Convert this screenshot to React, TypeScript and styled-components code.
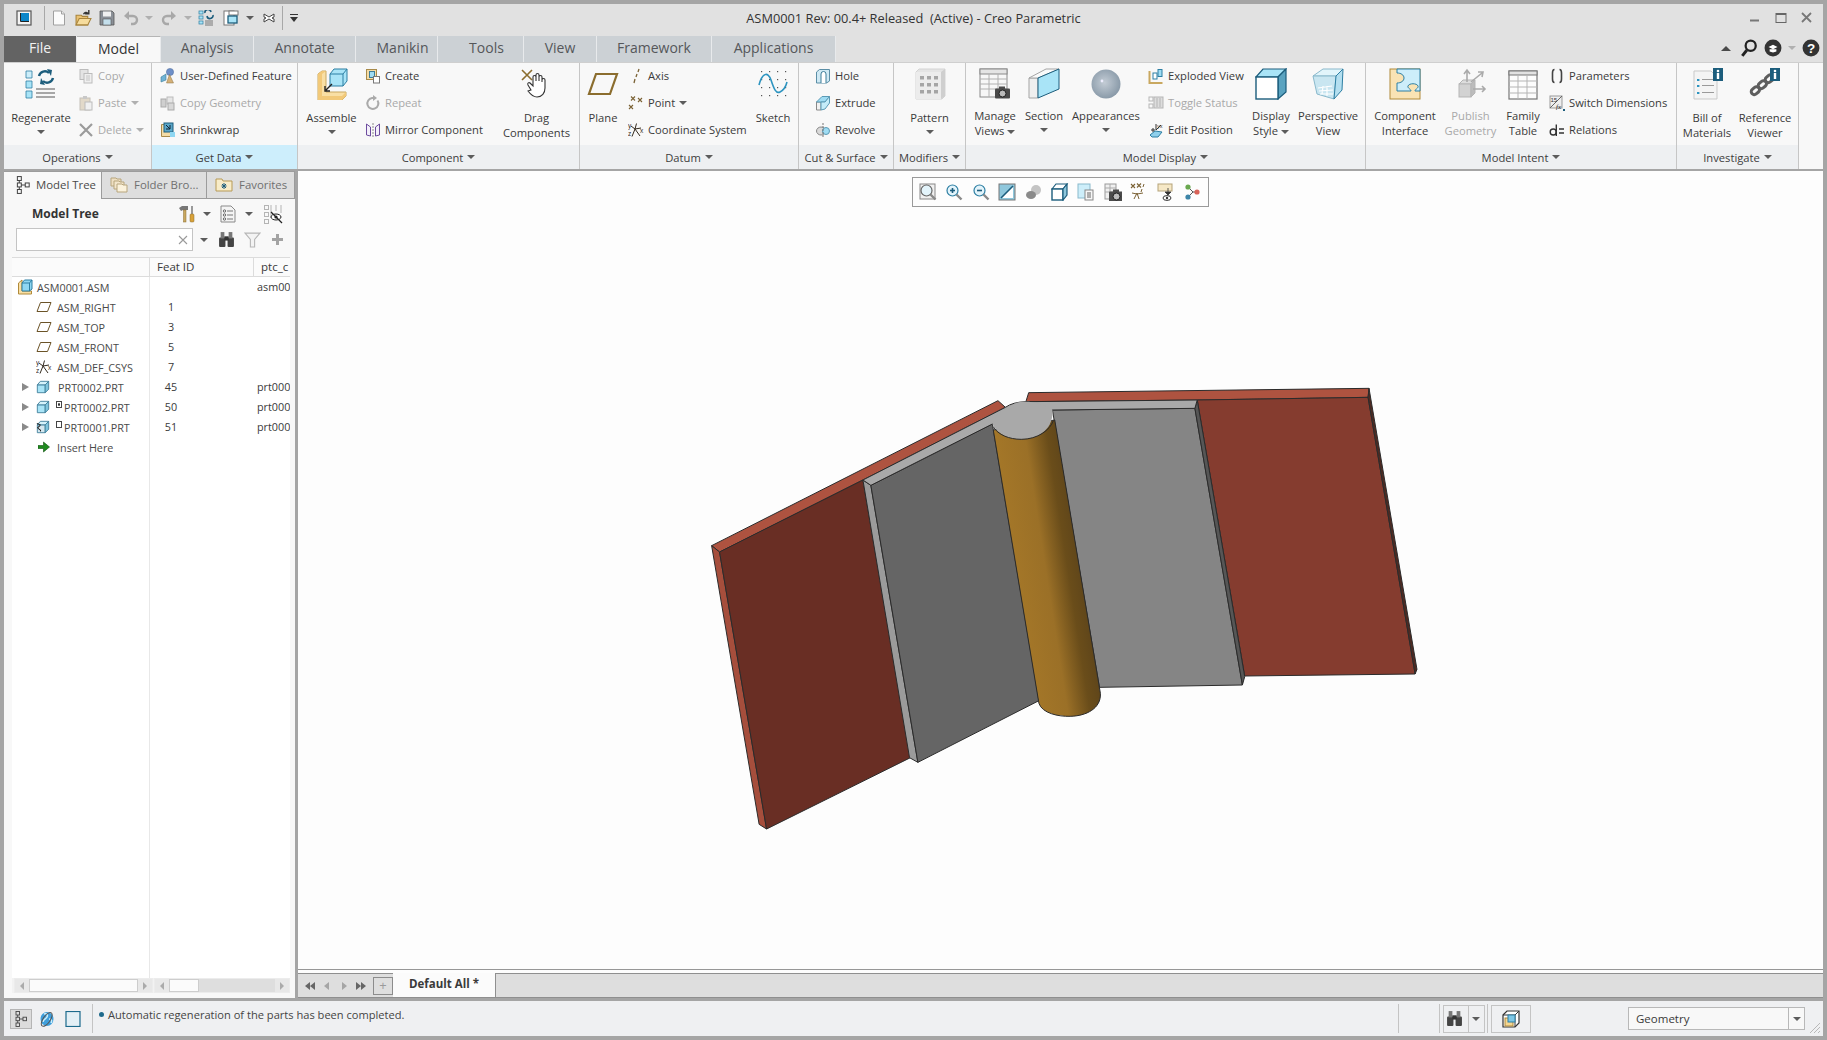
import React from "react";
import styled, { createGlobalStyle } from "styled-components";

const GlobalStyle = createGlobalStyle`
  html, body {
    margin: 0;
    padding: 0;
    overflow: hidden;
    background: #a5a5a5;
  }
  * {
    box-sizing: border-box;
  }
`;

const Window = styled.div`
  width: 1827px;
  height: 1040px;
  padding: 4px;
  background: #a5a5a5;
  display: flex;
  flex-direction: column;
  font-family: "Open Sans", "Noto Sans", sans-serif;
  font-size: 11.2px;
  color: #3a3a3a;
`;

/* ---------- title bar ---------- */
const TitleBar = styled.div`
  height: 32px;
  padding-bottom: 4px;
  background: #e1e1e1;
  display: grid;
  grid-template-columns: 1fr auto 1fr;
  align-items: center;
`;
const Qat = styled.div`
  display: flex;
  align-items: center;
  height: 100%;
`;
const QatSlot = styled.div<{ $w: number }>`
  width: ${(p) => p.$w}px;
  display: flex;
  justify-content: center;
  align-items: center;
`;
const QatSep = styled.div`
  width: 1px;
  height: 24px;
  background: #a8a8a8;
`;
const Title = styled.div`
  font-size: 12.8px;
  color: #333;
  white-space: pre;
`;
const WinControls = styled.div`
  display: flex;
  justify-content: flex-end;
  gap: 10px;
  padding-right: 8px;
`;

/* ---------- ribbon tabs ---------- */
const TabRow = styled.div`
  height: 26px;
  background: #e1e1e1;
  display: flex;
  align-items: stretch;
`;
const Tab = styled.div<{ $w: number; $kind?: "file" | "active"; $shift?: number }>`
  width: ${(p) => p.$w}px;
  display: flex;
  align-items: center;
  justify-content: center;
  padding-bottom: 3px;
  padding-left: ${(p) => p.$shift ?? 0}px;
  font-size: 14px;
  border-right: 1px solid #e8eaec;
  color: ${(p) => (p.$kind === "file" ? "#f2f2f2" : p.$kind === "active" ? "#333" : "#55575a")};
  background: ${(p) => (p.$kind === "file" ? "#636363" : p.$kind === "active" ? "#f8f8f8" : "#ccd1d5")};
  ${(p) => p.$kind === "active" && "border-top: 1px solid #b5b5b5;"}
`;
const TabRight = styled.div`
  flex: 1;
  display: flex;
  justify-content: flex-end;
  align-items: center;
  gap: 6px;
  padding: 0 3px 2px 0;
`;

/* ---------- ribbon ---------- */
const Ribbon = styled.div`
  height: 107px;
  margin-bottom: 2px;
  background: #f8f8f8;
  border-top: 1px solid #cfcfcf;
  display: flex;
`;
const Group = styled.div<{ $w: number }>`
  width: ${(p) => p.$w}px;
  flex: none;
  display: flex;
  flex-direction: column;
  border-right: 1px solid #c6c6c6;
`;
const GroupBody = styled.div<{ $pad?: number }>`
  flex: 1;
  display: flex;
  padding-left: ${(p) => p.$pad ?? 0}px;
`;
const GroupFooter = styled.div<{ $hot?: boolean }>`
  height: 24px;
  background: ${(p) => (p.$hot ? "#cdeefc" : "#eef0f2")};
  display: flex;
  align-items: center;
  justify-content: center;
  gap: 4px;
  color: #3d3d3d;
`;
const RibbonRest = styled.div`
  flex: 1;
`;
const Large = styled.div<{ $w: number; $off?: boolean }>`
  width: ${(p) => p.$w}px;
  flex: none;
  display: flex;
  flex-direction: column;
  align-items: center;
  padding-top: 5px;
  text-align: center;
  line-height: 15px;
  color: ${(p) => (p.$off ? "#a9a9a9" : "#3a3a3a")};
`;
const LargeLabel = styled.div<{ $tight?: boolean }>`
  margin-top: ${(p) => (p.$tight ? 8 : 10)}px;
  white-space: nowrap;
`;
const SmallCol = styled.div<{ $w: number; $pad?: number }>`
  width: ${(p) => p.$w}px;
  flex: none;
  margin-top: -1px;
  padding-left: ${(p) => p.$pad ?? 0}px;
  display: flex;
  flex-direction: column;
`;
const SmallRow = styled.div<{ $off?: boolean }>`
  height: 27px;
  display: flex;
  align-items: center;
  gap: 4px;
  white-space: nowrap;
  color: ${(p) => (p.$off ? "#a9a9a9" : "#3a3a3a")};
`;
const GroupSep = styled.div`
  width: 1px;
  margin: 8px 0 6px;
  background: #dcdcdc;
`;
const Caret = styled.span<{ $dim?: boolean }>`
  display: inline-block;
  flex: none;
  width: 0;
  height: 0;
  border-left: 4px solid transparent;
  border-right: 4px solid transparent;
  border-top: 4px solid ${(p) => (p.$dim ? "#b0b0b0" : "#5c5c5c")};
  vertical-align: middle;
`;
const CaretBelow = styled(Caret)`
  margin-top: 5px;
`;

/* ---------- main area ---------- */
const Main = styled.div`
  height: 827px;
  display: flex;
  gap: 3px;
`;
const Panel = styled.div`
  width: 291px;
  flex: none;
  background: #f8f8f8;
  display: flex;
  flex-direction: column;
  padding-bottom: 5px;
`;
const PanelTabs = styled.div`
  height: 28px;
  display: flex;
  background: #dedede;
`;
const PanelTab = styled.div<{ $w: number; $active?: boolean }>`
  width: ${(p) => p.$w}px;
  display: flex;
  align-items: center;
  gap: ${(p) => (p.$active ? 4 : 6)}px;
  padding: 0 0 2px ${(p) => (p.$active ? 10 : 8)}px;
  font-size: 11.4px;
  white-space: nowrap;
  color: ${(p) => (p.$active ? "#4a4a4a" : "#707070")};
  background: ${(p) => (p.$active ? "#f8f8f8" : "#dedede")};
  border-right: 1px solid #9c9c9c;
  border-top: 1px solid #9c9c9c;
  border-bottom: ${(p) => (p.$active ? "none" : "1px solid #9c9c9c")};
`;
const PanelHead = styled.div`
  height: 29px;
  display: flex;
  align-items: center;
`;
const PanelTitle = styled.div`
  width: 174px;
  padding-left: 28px;
  font-weight: 700;
  font-size: 12px;
  color: #333;
`;
const PanelSlot = styled.div<{ $w: number }>`
  width: ${(p) => p.$w}px;
  flex: none;
  display: flex;
  justify-content: center;
  align-items: center;
`;
const SearchRow = styled.div`
  height: 23px;
  display: flex;
  align-items: center;
  padding-left: 12px;
`;
const SearchBox = styled.div`
  width: 177px;
  height: 23px;
  flex: none;
  background: #fff;
  border: 1px solid #c4c4c4;
  display: flex;
  align-items: center;
  justify-content: flex-end;
  padding-right: 4px;
`;
const Tree = styled.div`
  flex: 1;
  margin: 6px 5px 0 8px;
  background: #fff;
  border-top: 1px solid #dcdcdc;
  display: flex;
  flex-direction: column;
`;
const TreeHeader = styled.div`
  height: 19px;
  flex: none;
  display: grid;
  grid-template-columns: 138px 104px 1fr;
  border-bottom: 1px solid #dcdcdc;
  background: #fbfbfb;
  font-size: 11.5px;
`;
const HeaderCell = styled.div`
  padding-left: 7px;
  line-height: 18px;
  border-right: 1px solid #dcdcdc;
  overflow: hidden;
  &:last-child {
    border-right: none;
  }
`;
const TreeRow = styled.div`
  height: 20px;
  flex: none;
  display: grid;
  grid-template-columns: 138px 104px 1fr;
  font-size: 10.8px;
`;
const NameCell = styled.div<{ $pad: number }>`
  display: flex;
  align-items: center;
  padding-left: ${(p) => p.$pad}px;
  border-right: 1px solid #e8e8e8;
  white-space: nowrap;
  color: #4a4a4a;
`;
const IdCell = styled.div`
  width: 42px;
  text-align: center;
  line-height: 20px;
`;
const ParamCell = styled.div`
  line-height: 20px;
  overflow: hidden;
  white-space: nowrap;
  margin-left: 3px;
`;
const Expander = styled.span`
  width: 0;
  height: 0;
  flex: none;
  margin-right: 7px;
  border-top: 4.5px solid transparent;
  border-bottom: 4.5px solid transparent;
  border-left: 7px solid #8a8a8a;
`;
const RowLabel = styled.span<{ $gap: number }>`
  margin-left: ${(p) => p.$gap}px;
`;
const Marker = styled.span<{ $dot?: boolean }>`
  width: 6px;
  height: 7px;
  flex: none;
  margin: -5px 1px 0 6px;
  border: 1px solid #444;
  background: ${(p) => (p.$dot ? "radial-gradient(#333 30%, #fff 40%)" : "#fff")};
`;
const TreeFiller = styled.div`
  flex: 1;
  display: grid;
  grid-template-columns: 138px 1fr;
`;
const FillerCell = styled.div`
  border-right: 1px solid #e8e8e8;
`;
const ScrollRow = styled.div`
  height: 15px;
  flex: none;
  display: grid;
  grid-template-columns: 139px 1fr;
  gap: 1px;
  padding-left: 2px;
  background: #f2f2f2;
`;
const ScrollBar = styled.div`
  display: flex;
  height: 15px;
  background: #dedede;
  border: 1px solid #ececec;
`;
const ScrollBtn = styled.div`
  width: 14px;
  display: flex;
  align-items: center;
  justify-content: center;
  background: #e8e8e8;
`;
const ScrollArrow = styled.span<{ $dir: "l" | "r" }>`
  width: 0;
  height: 0;
  border-top: 4px solid transparent;
  border-bottom: 4px solid transparent;
  ${(p) => (p.$dir === "l" ? "border-right" : "border-left")}: 4px solid #ababab;
`;
const ScrollTrack = styled.div<{ $w?: number; $light?: boolean }>`
  ${(p) => (p.$w ? `width: ${p.$w}px; flex: none;` : "flex: 1;")}
  background: ${(p) => (p.$light ? "#fbfbfb" : "#dedede")};
  ${(p) => p.$light && "border: 1px solid #cdcdcd;"}
`;

const Viewport = styled.div`
  flex: 1;
  display: flex;
  flex-direction: column;
  background: #fdfdfd;
`;
const Canvas = styled.div`
  flex: 1;
  position: relative;
  background: #fdfdfd;
  border-bottom: 1px solid #979797;
`;
const MiniToolbar = styled.div`
  position: absolute;
  top: 6px;
  left: 614px;
  width: 297px;
  height: 30px;
  background: #fdfdfd;
  border: 1px solid #9a9a9a;
  display: flex;
  align-items: center;
  gap: 8.4px;
  padding-left: 6px;
`;
const ModelSvg = styled.svg`
  position: absolute;
  left: 402px;
  top: 209px;
  width: 730px;
  height: 460px;
`;
const ModelTabs = styled.div`
  height: 25px;
  margin-top: 3px;
  background: #dedede;
  border-top: 1px solid #8f8f8f;
  border-bottom: 1px solid #8f8f8f;
  display: flex;
  align-items: stretch;
`;
const TabNav = styled.div`
  width: 95px;
  display: flex;
  align-items: center;
  padding-left: 3px;
`;
const NavGlyph = styled.div`
  width: 17px;
  display: flex;
  justify-content: center;
`;
const NewTab = styled.div`
  width: 20px;
  height: 18px;
  margin-left: 4px;
  border: 1px solid #8c8c8c;
  display: flex;
  align-items: center;
  justify-content: center;
  color: #9a9a9a;
  font-size: 13px;
  line-height: 1;
`;
const ModelTab = styled.div`
  width: 103px;
  margin: -1px 0 0;
  padding-bottom: 3px;
  background: #fbfbfb;
  border-right: 1px solid #8f8f8f;
  display: flex;
  align-items: center;
  justify-content: center;
  font-weight: 700;
  font-size: 11.5px;
  color: #3a3a3a;
`;

/* ---------- status bar ---------- */
const StatusBar = styled.div`
  height: 35px;
  margin-top: 3px;
  background: #eff0f2;
  display: flex;
  align-items: center;
  position: relative;
`;
const ToggleBox = styled.div`
  width: 22px;
  height: 20px;
  margin: 0 7px 0 6px;
  background: #dcdcdc;
  border: 1px solid #b5b5b5;
  display: flex;
  align-items: center;
  justify-content: center;
`;
const StatusIcon = styled.div`
  width: 16px;
  margin-right: 10px;
  display: flex;
`;
const StatusSep = styled.div<{ $ml?: number }>`
  width: 1px;
  height: 29px;
  margin-left: ${(p) => p.$ml ?? 0}px;
  background: #c4c4c4;
  flex: none;
`;
const Message = styled.div`
  flex: none;
  width: 1305px;
  display: flex;
  align-items: center;
  gap: 4px;
  padding: 0 0 8px 6px;
  font-size: 11.1px;
  color: #444;
`;
const Bullet = styled.span`
  width: 5px;
  height: 5px;
  border-radius: 50%;
  background: #1f6a8c;
`;
const StatusBox = styled.div<{ $w: number }>`
  width: ${(p) => p.$w}px;
  height: 28px;
  margin-left: 3px;
  flex: none;
  border: 1px solid #c4c4c4;
  display: flex;
  align-items: center;
  justify-content: center;
`;
const BoxDivider = styled.div`
  width: 15px;
  height: 100%;
  margin-left: 5px;
  border-left: 1px solid #c4c4c4;
  display: flex;
  align-items: center;
  justify-content: center;
`;
const Select = styled.div`
  width: 177px;
  height: 23px;
  margin-left: 97px;
  flex: none;
  background: #f8f8f8;
  border: 1px solid #b8b8b8;
  display: flex;
  align-items: center;
  padding-left: 7px;
  font-size: 11.5px;
`;
const SelectLabel = styled.div`
  flex: 1;
`;
const SelectBtn = styled.div`
  width: 16px;
  height: 100%;
  border-left: 1px solid #b8b8b8;
  display: flex;
  align-items: center;
  justify-content: center;
`;
const Grip = styled.svg`
  position: absolute;
  right: 2px;
  bottom: 2px;
`;

/* ---------- icons ---------- */
const I = ({ s = 16, vb = 16, children }: { s?: number; vb?: number; children: React.ReactNode }) => (
  <svg width={s} height={s} viewBox={`0 0 ${vb} ${vb}`} style={{ flex: "none", display: "block" }}>
    {children}
  </svg>
);

const Cube16 = ({ front = "#a9e4f7", top = "#d4f2fb", side = "#7fc4dc", line = "#3c7d99" }) => (
  <g stroke={line} strokeWidth="1" strokeLinejoin="round">
    <polygon points="1.5,5.5 10.5,5.5 10.5,14.5 1.5,14.5" fill={front} />
    <polygon points="1.5,5.5 5,1.5 14.5,1.5 10.5,5.5" fill={top} />
    <polygon points="10.5,5.5 14.5,1.5 14.5,10.5 10.5,14.5" fill={side} />
  </g>
);

const CopyIcon = () => (
  <I>
    <rect x="2" y="1.5" width="8" height="10" fill="#e4e4e4" stroke="#bcbcbc" />
    <rect x="6" y="5.5" width="8" height="9.5" fill="#efefef" stroke="#bcbcbc" />
    <path d="M8 8h4M8 10h4M8 12h4" stroke="#c4c4c4" />
  </I>
);
const PasteIcon = () => (
  <I>
    <rect x="2" y="3" width="10" height="12" fill="#e2d9c9" stroke="#c4c0b8" />
    <rect x="5" y="1" width="4" height="3" fill="#c8c8c8" />
    <rect x="7" y="7" width="7" height="8" fill="#f0f0f0" stroke="#bcbcbc" />
  </I>
);
const DeleteIcon = () => (
  <I>
    <path d="M2 2l12 12M14 2L2 14" stroke="#9b9b9b" strokeWidth="2.2" />
  </I>
);
const UdfIcon = () => (
  <I>
    <path d="M1 9l5-3v6l-5 2z" fill="#6fb3d6" stroke="#3c7d99" strokeWidth=".6" />
    <circle cx="10" cy="4" r="3.6" fill="#6e8fc8" stroke="#4d6a9a" strokeWidth=".5" />
    <path d="M9.5 6.5L6.5 15h7z" fill="#d4b078" stroke="#8b7040" strokeWidth=".5" />
  </I>
);
const CopyGeomIcon = () => (
  <I>
    <rect x="1" y="4" width="5" height="8" fill="#cfcfcf" stroke="#aaa" />
    <rect x="7" y="2" width="6" height="7" fill="#e6e6e6" stroke="#bbb" />
    <rect x="8" y="8" width="6" height="7" fill="#d8d8d8" stroke="#aaa" />
  </I>
);
const ShrinkIcon = () => (
  <I>
    <path d="M1.5 2.5h10v12h-10z" fill="#f4dca6" stroke="#a88a4a" />
    <rect x="4" y="1" width="9" height="9" fill="#5aa6c8" stroke="#1c5d7c" />
    <path d="M6 3l4 4M10 3v4H6" stroke="#123" fill="none" />
    <rect x="10" y="10" width="5" height="5" fill="#8fd7f2" />
  </I>
);
const CreateIcon = () => (
  <I>
    <rect x="1.5" y="1.5" width="10" height="10" fill="#f4dca6" stroke="#a88a4a" />
    <rect x="4.5" y="3.5" width="5" height="6" fill="#9fdcf3" stroke="#3c7d99" />
    <rect x="8.5" y="8.5" width="6" height="6.5" fill="#fff" stroke="#777" />
  </I>
);
const RepeatIcon = () => (
  <I>
    <path d="M12.5 5.5A5.5 5.5 0 1 1 7 3h2" fill="none" stroke="#aaa" strokeWidth="2" />
    <path d="M8 0l4 3-4 3z" fill="#aaa" />
  </I>
);
const MirrorIcon = () => (
  <I>
    <path d="M1.5 2l4 3v9l-4-1zM14.5 2l-4 3v9l4-1z" fill="#f3effa" stroke="#6d4c9e" />
    <path d="M8 1v14" stroke="#8a8a8a" strokeDasharray="2 1" />
  </I>
);
const AxisIcon = () => (
  <I>
    <path d="M11 1l-1 3M9 6L8 9M7 11l-1 4" stroke="#7b6235" strokeWidth="1.3" />
  </I>
);
const XMark = ({ x, y, c = "#7b6235" }: { x: number; y: number; c?: string }) => (
  <path d={`M${x - 2} ${y - 2}l4 4m0-4l-4 4`} stroke={c} strokeWidth="1.1" />
);
const PointIcon = () => (
  <I>
    <XMark x={5} y={3.5} />
    <XMark x={12} y={5} />
    <XMark x={3} y={12} />
  </I>
);
const CsysIcon = ({ c = "#332a1e" }: { c?: string }) => (
  <I>
    <path d="M8.5 1.5L7 7l-3 7.5M7 7l5 7M3 4l4 3 6-1" stroke={c} fill="none" strokeWidth="1" />
    <text x="0" y="5.5" fontSize="6.5" fill={c} fontFamily="Liberation Sans, sans-serif">y</text>
    <text x="0" y="14" fontSize="6.5" fill={c} fontFamily="Liberation Sans, sans-serif">z</text>
    <text x="12" y="11" fontSize="6.5" fill={c} fontFamily="Liberation Sans, sans-serif">x</text>
  </I>
);
const HoleIcon = () => (
  <I>
    <path d="M1.5 4l3-2.5h10V13l-3 2h-10z" fill="#cfe9f4" stroke="#5b8ea6" />
    <path d="M6 15V6a2.5 2.5 0 0 1 5 0v9" fill="#fff" stroke="#3c7d99" />
  </I>
);
const ExtrudeIcon = () => (
  <I>
    <polygon points="1.5,7 6,7 6,15 1.5,15" fill="#f1f1f1" stroke="#888" />
    <polygon points="1.5,7 7,1.5 14.5,1.5 10,7" fill="#9fdcf3" stroke="#5b9ab5" />
    <polygon points="6,7 10,7 14.5,1.5 14.5,8 10,14 6,15" fill="#c4ecf9" stroke="#5b9ab5" />
  </I>
);
const RevolveIcon = () => (
  <I>
    <ellipse cx="6" cy="9" rx="4.5" ry="4" fill="#d9d9d9" stroke="#888" />
    <ellipse cx="11" cy="9" rx="3.5" ry="3.5" fill="#9fdcf3" stroke="#5b9ab5" />
    <path d="M8 1v14" stroke="#777" strokeDasharray="2 1" />
  </I>
);
const ExplodedIcon = () => (
  <I>
    <path d="M1.5 3v12h13" fill="none" stroke="#c9a860" strokeWidth="2" />
    <rect x="5" y="5" width="4" height="6" fill="#fff" stroke="#2d7fa3" />
    <rect x="10" y="1.5" width="4" height="7" fill="#9fdcf3" stroke="#2d7fa3" />
  </I>
);
const ToggleIcon = () => (
  <I>
    <rect x="1" y="2" width="4" height="4" fill="none" stroke="#b5b5b5" />
    <rect x="1" y="9" width="4" height="4" fill="none" stroke="#b5b5b5" />
    <rect x="6" y="2" width="9" height="11" fill="#ddd" stroke="#b5b5b5" />
    <path d="M9 3v9M12 3v9" stroke="#b5b5b5" />
  </I>
);
const EditPosIcon = () => (
  <I>
    <path d="M2 13l5-4 7 1-4 5H4z" fill="#8fd0ec" stroke="#2d7fa3" />
    <path d="M3 8h4M5 6v4M8 2v6M8 8l5-5" stroke="#333" />
    <text x="9" y="6" fontSize="5.5" fill="#333" fontFamily="Liberation Sans, sans-serif">yx</text>
  </I>
);
const ParamsIcon = () => (
  <I>
    <path d="M5.5 1.5C3.500 1.500 3.500 3 3.500 5v6c0 2 0 3.500 2 3.500M10.500 1.500c2 0 2 1.500 2 3.500v6c0 2 0 3.500-2 3.500" fill="none" stroke="#444" strokeWidth="1.6" />
  </I>
);
const SwitchIcon = () => (
  <I>
    <rect x="1" y="1" width="12" height="12" fill="#eee" stroke="#999" />
    <path d="M1 13L13 1" stroke="#666" />
    <text x="1.5" y="6.5" fontSize="6" fill="#333" fontFamily="Liberation Sans, sans-serif">15</text>
    <text x="7" y="14" fontSize="7" fontStyle="italic" fill="#222" fontFamily="Liberation Serif, serif">fx</text>
    <rect x="14" y="14" width="2" height="2" fill="#1c5d7c" />
  </I>
);
const RelationsIcon = () => (
  <I>
    <circle cx="4.2" cy="10" r="3" fill="none" stroke="#333" strokeWidth="1.4" />
    <path d="M7.3 2.5V14" stroke="#333" strokeWidth="1.4" />
    <path d="M10 7h5M10 11h5" stroke="#333" strokeWidth="1.4" />
  </I>
);

const L = ({ children }: { children: React.ReactNode }) => (
  <I s={32} vb={32}>
    {children}
  </I>
);
const RegenIcon = () => (
  <L>
    <g stroke="#2d7fa3" strokeWidth=".8">
      <polygon points="1,3 7,3 7,10 1,10" fill="#cdeefa" />
      <polygon points="1,13 7,13 7,20 1,20" fill="#a9e4f7" />
      <polygon points="1,23 7,23 7,30 1,30" fill="#a9e4f7" />
    </g>
    <path d="M14 8a6 6 0 0 1 10-3M28 10a6 6 0 0 1-10 3" fill="none" stroke="#1c5d7c" strokeWidth="2.4" />
    <path d="M22 1l5 1-1 6zM20 17l-5-1 1-6z" fill="#1c5d7c" />
    <path d="M11 21h19M11 25h19M11 29h19" stroke="#8c8c8c" strokeWidth="1.6" />
  </L>
);
const AssembleIcon = () => (
  <L>
    <polygon points="2,6 6,3 10,3 10,24 30,24 30,28 26,32 2,32" fill="#f9dfa4" stroke="#c9a860" />
    <polygon points="2,6 6,3 10,3 6,6 6,28 26,28 30,24 30,28 26,32 2,32" fill="#f2c979" />
    <polygon points="14,6 18,1 31,1 31,13 27,18 14,18" fill="#a9e4f7" stroke="#2d7fa3" />
    <path d="M14 6h13v12M27 6l4-5" fill="none" stroke="#2d7fa3" />
    <path d="M16 16l-6 6M9 18v5h5" stroke="#222" fill="none" strokeWidth="1.4" />
  </L>
);
const DragIcon = () => (
  <L>
    <path d="M1 2l10 10M11 2L1 12" stroke="#8b6d2e" strokeWidth="1.6" />
    <path d="M10 22l-3-5c-1-2 1-3 2-2l3 3V9c0-2 3-2 3 0v4-6c0-2 3-2 3 0v6-4c0-2 3-2 3 0v5-2c0-2 3-2 3 0v8c0 5-3 9-8 9-4 0-6-2-9-6z" fill="#fff" stroke="#333" strokeWidth="1.1" />
  </L>
);
const PlaneIcon = () => (
  <L>
    <path d="M9 6h21l-7 20H2z" fill="none" stroke="#8b6d2e" strokeWidth="2.2" />
  </L>
);
const SketchIcon = () => (
  <L>
    <g fill="#555">
      {[4, 12, 20, 28].map((x) => [3, 11, 19, 27].map((y) => <rect key={`${x}-${y}`} x={x} y={y} width="1.2" height="1.2" />))}
    </g>
    <path d="M2 17c3-12 9-14 12-5s5 14 9 12 6-6 7-10" fill="none" stroke="#2d94c0" strokeWidth="1.6" />
  </L>
);
const PatternIcon = () => (
  <L>
    <polygon points="2,4 5,1 31,1 31,28 28,31 2,31" fill="#e4e4e4" stroke="#d4d4d4" />
    <rect x="2" y="4" width="25" height="27" fill="#ececec" />
    <polygon points="27,4 31,1 31,28 27,31" fill="#cfcfcf" />
    <g fill="#a5a5a5">
      {[6, 13, 20].map((x) => [8, 15, 22].map((y) => <rect key={`${x}-${y}`} x={x} y={y} width="4" height="3.5" />))}
    </g>
  </L>
);
const CameraMark = ({ x, y }: { x: number; y: number }) => (
  <g transform={`translate(${x} ${y})`}>
    <rect x="0" y="2.5" width="15" height="10" rx="1" fill="#4a4a4a" />
    <rect x="4" y="0.5" width="6" height="3" fill="#4a4a4a" />
    <circle cx="7.5" cy="7.5" r="3.5" fill="#bbb" stroke="#222" />
  </g>
);
const ManageViewsIcon = () => (
  <L>
    <rect x="1" y="1" width="27" height="28" fill="#f7f7f7" stroke="#8a8a8a" />
    <rect x="1" y="1" width="27" height="5" fill="#e4e4e4" stroke="#8a8a8a" />
    <path d="M1 11h27M1 16h27M1 21h27M10 6v23M19 6v23" stroke="#b0b0b0" />
    <CameraMark x={16} y={18} />
  </L>
);
const SectionIcon = () => (
  <L>
    <polygon points="1,10 10,10 10,30 1,30" fill="#efefef" stroke="#a5a5a5" />
    <polygon points="1,10 18,1 31,1 10,10" fill="#fafafa" stroke="#a5a5a5" />
    <polygon points="10,10 31,1 31,21 10,30" fill="#a9e4f7" stroke="#1c5d7c" />
  </L>
);
const SphereIcon = () => (
  <L>
    <defs>
      <radialGradient id="sph" cx="45%" cy="45%" r="60%">
        <stop offset="0" stopColor="#c3ccd5" />
        <stop offset="1" stopColor="#8596a5" />
      </radialGradient>
    </defs>
    <circle cx="16" cy="16" r="14.5" fill="url(#sph)" />
    <circle cx="12" cy="13" r="1.4" fill="#eef" />
  </L>
);
const DisplayStyleIcon = () => (
  <L>
    <polygon points="1,9 8,1 31,1 23,9" fill="#a9e4f7" stroke="#1c5d7c" strokeWidth="1.2" />
    <polygon points="23,9 31,1 31,24 23,31" fill="#5aa3c0" stroke="#1c5d7c" strokeWidth="1.2" />
    <rect x="1" y="9" width="22" height="22" fill="#fff" stroke="#1c5d7c" strokeWidth="1.4" />
  </L>
);
const PerspectiveIcon = () => (
  <L>
    <polygon points="1,8 11,1 31,1 24,8" fill="#e2f5fb" stroke="#8ab9cc" />
    <polygon points="1,8 24,8 22,31 5,26" fill="#c9e6f1" stroke="#8ab9cc" />
    <polygon points="24,8 31,1 30,22 22,31" fill="#b4dff0" stroke="#2d7fa3" />
    <path d="M6 20l14-2M7 23l14-1M8 26l13 0M11 18l-1 8M15 18v10" stroke="#fff" strokeWidth="1.2" />
  </L>
);
const InterfaceIcon = () => (
  <L>
    <rect x="1" y="1" width="30" height="30" fill="#f9e3b4" stroke="#b08a3a" />
    <path d="M8 1H31V23H26C26 21 30 20 29 18 28 15 20 15 19 18 18 20 22 21 22 23H8V15C12 15 15 13 15 10 15 7 12 5 8 5Z" fill="#cdeefa" stroke="#2d7fa3" />
  </L>
);
const PublishIcon = () => (
  <L>
    <polygon points="4,16 8,12 20,12 16,16" fill="#ddd" stroke="#b5b5b5" />
    <rect x="4" y="16" width="12" height="13" fill="#d2d2d2" stroke="#b5b5b5" />
    <polygon points="16,16 20,12 20,25 16,29" fill="#bcbcbc" stroke="#b5b5b5" />
    <path d="M12 14V3M9 6l3-4 3 4M16 14l11-9M23 4l5 0-1 5M18 21h12M27 18l3 3-3 3" stroke="#aaa" strokeWidth="1.6" fill="none" />
  </L>
);
const TableIcon = () => (
  <L>
    <rect x="2" y="3" width="28" height="28" fill="#fdfdfd" stroke="#777" strokeWidth="1.2" />
    <rect x="2" y="3" width="28" height="4" fill="#e2e2e2" stroke="#777" />
    <path d="M2 13h28M2 19h28M2 25h28M11 7v24M20 7v24" stroke="#b5b5b5" />
  </L>
);
const InfoBadge = ({ x }: { x: number }) => (
  <g transform={`translate(${x} 0)`}>
    <rect width="10" height="13" fill="#1c5d7c" />
    <circle cx="5" cy="3" r="1.3" fill="#fff" />
    <rect x="3.8" y="5" width="2.4" height="6" fill="#fff" />
  </g>
);
const BomIcon = () => (
  <L>
    <polygon points="3,3 20,3 26,9 26,31 3,31" fill="#f4f4f4" stroke="#c9c9c9" />
    {[11, 17, 24].map((y) => (
      <g key={y}>
        <rect x="6" y={y} width="2.4" height="2" fill="#2d94c0" />
        <rect x="11" y={y} width="12" height="1" fill="#9a9a9a" />
      </g>
    ))}
    <InfoBadge x={22} />
  </L>
);
const RefViewerIcon = () => (
  <L>
    <g fill="none" stroke="#5e5e5e" strokeWidth="3">
      <rect x="2" y="20" width="9" height="6" rx="3" transform="rotate(-40 6 23)" />
      <rect x="9" y="14" width="9" height="6" rx="3" transform="rotate(-40 13 17)" />
      <rect x="16" y="8" width="9" height="6" rx="3" transform="rotate(-40 20 11)" />
    </g>
    <InfoBadge x={21} />
  </L>
);

const Glass = ({ sign }: { sign?: "+" | "-" | "box" }) => (
  <I s={18} vb={18}>
    {sign === "box" && <rect x="1" y="1" width="15" height="15" fill="#f0f0f0" stroke="#888" />}
    <circle cx="7.5" cy="7.5" r="5.5" fill="#e3f4fb" stroke={sign === "box" ? "#666" : "#2d7fa3"} strokeWidth="1.2" />
    <path d="M11.5 11.5l5 5" stroke="#8a8a8a" strokeWidth="2.4" />
    {sign && sign !== "box" && <path d="M5 7.5h5" stroke="#1c5d7c" strokeWidth="1.6" />}
    {sign === "+" && <path d="M7.5 5v5" stroke="#1c5d7c" strokeWidth="1.6" />}
  </I>
);
const MiniIcons = () => (
  <>
    <Glass sign="box" />
    <Glass sign="+" />
    <Glass sign="-" />
    <I s={18} vb={18}>
      <rect x="1" y="1" width="16" height="16" fill="#8fc7dc" stroke="#777" />
      <path d="M3 15L15 3V15z" fill="#fff" />
      <path d="M3 15L15 3" stroke="#1c5d7c" strokeWidth="1.6" />
    </I>
    <I s={18} vb={18}>
      <ellipse cx="11" cy="7" rx="5" ry="5" fill="#c4c4c4" />
      <ellipse cx="6" cy="12" rx="5" ry="4" fill="#8a8a8a" />
    </I>
    <I s={18} vb={18}>
      <polygon points="1,6 5,1 16,1 12,6" fill="#fff" stroke="#1c5d7c" strokeWidth="1.2" />
      <rect x="1" y="6" width="11" height="11" fill="#fff" stroke="#1c5d7c" strokeWidth="1.4" />
      <polygon points="12,6 16,1 16,12 12,17" fill="#8fc7dc" stroke="#1c5d7c" strokeWidth="1.2" />
    </I>
    <I s={18} vb={18}>
      <rect x="1" y="1" width="12" height="14" fill="#cdeefa" stroke="#8ab9cc" />
      <rect x="8" y="7" width="8" height="10" fill="#f7f7f7" stroke="#888" />
      <path d="M10 10h4M10 12h4M10 14h4" stroke="#666" />
    </I>
    <I s={18} vb={18}>
      <rect x="1" y="1" width="11" height="15" fill="#f0f0f0" stroke="#999" />
      <path d="M1 5h11M1 9h11M6 1v15" stroke="#aaa" />
      <CameraMark x={5} y={6} />
    </I>
    <I s={18} vb={18}>
      <XMark x={3} y={3} />
      <XMark x={9} y={2.5} />
      <path d="M14 1l-1 3M12 6l-1 3" stroke="#7b6235" />
      <path d="M4 16l3-6 2 6M2 10l5 1 6-1" stroke="#7b6235" fill="none" />
    </I>
    <I s={18} vb={18}>
      <rect x="1" y="1" width="14" height="7" fill="#f6e8c6" stroke="#b5a37a" />
      <path d="M11 5v4M8 9h6l-3 3z" fill="#333" stroke="#333" strokeWidth=".8" />
      <ellipse cx="10" cy="15" rx="4" ry="2.4" fill="#fff" stroke="#333" />
      <circle cx="10" cy="15" r="1.2" fill="#333" />
    </I>
    <I s={18} vb={18}>
      <path d="M5 4l5 5-5 5M10 9h4" stroke="#555" fill="none" />
      <circle cx="5" cy="4" r="2.6" fill="#6aa84f" />
      <circle cx="14" cy="9" r="2.6" fill="#d9645a" />
      <circle cx="5" cy="14" r="2.6" fill="#3d85a8" />
    </I>
  </>
);

const DocIcon = () => (
  <I s={16}>
    <path d="M2.5 1h8l3 3v11h-11z" fill="#fbfbfb" stroke="#a0a0a0" />
    <path d="M10.500 1v3h3" fill="#e8e8e8" stroke="#a0a0a0" />
  </I>
);
const OpenIcon = () => (
  <I s={17} vb={16}>
    <path d="M1 14V5h5l1 1h5v8z" fill="#e9c173" stroke="#a8843c" />
    <path d="M1 14l3-6h11l-3 6z" fill="#f6dc9d" stroke="#a8843c" />
    <path d="M8 4c1-2 3-2 4-1M13 0v3.500h-3.500" stroke="#333" fill="none" strokeWidth="1.300" />
  </I>
);
const SaveIcon = () => (
  <I s={16}>
    <path d="M1 1h12l2 2v12H1z" fill="#8b9097" stroke="#555" strokeWidth=".8" />
    <rect x="4" y="1.500" width="8" height="5" fill="#f0f0f0" />
    <rect x="4" y="9" width="8" height="6" fill="#c4dfec" stroke="#555" strokeWidth=".6" />
  </I>
);
const UndoIcon = ({ flip }: { flip?: boolean }) => (
  <svg width="16" height="16" viewBox="0 0 16 16" style={{ transform: flip ? "scaleX(-1)" : undefined, display: "block" }}>
    <path d="M4 6h6a3.500 3.500 0 0 1 0 8H8" fill="none" stroke="#a8a8a8" strokeWidth="2.400" />
    <path d="M6 1v9L1 6z" fill="#a8a8a8" />
  </svg>
);
const RegenSmall = () => (
  <I s={16}>
    <rect x="1" y="1" width="4" height="3" fill="#a9e4f7" stroke="#2d7fa3" strokeWidth=".7" />
    <rect x="1" y="6" width="4" height="3" fill="#a9e4f7" stroke="#2d7fa3" strokeWidth=".7" />
    <rect x="1" y="11" width="4" height="3" fill="#a9e4f7" stroke="#2d7fa3" strokeWidth=".7" />
    <path d="M7 3a3 3 0 0 1 6-1M15 5a3 3 0 0 1-6 1" fill="none" stroke="#1c5d7c" strokeWidth="1.6" />
    <path d="M7 11h8M7 13h8M7 15h8" stroke="#777" />
  </I>
);
const WindowsIcon = () => (
  <I s={16}>
    <rect x="1" y="1" width="10" height="14" fill="#fff" stroke="#777" />
    <rect x="6" y="1" width="9" height="4" fill="#fff" stroke="#777" />
    <rect x="5" y="6" width="9" height="7" fill="#a9e4f7" stroke="#1c5d7c" strokeWidth="1.300" />
  </I>
);
const CloseSmall = () => (
  <I s={14} vb={14}>
    <path d="M2 3l5 3 5-3v3l-2 1 2 1v3L7 8l-5 3V8l2-1-2-1z" fill="#fff" stroke="#444" />
  </I>
);
const AppIcon = () => (
  <I s={16}>
    <rect x="1" y="1" width="14" height="14" fill="#f4f4f4" stroke="#555" strokeWidth="1.200" />
    <rect x="5" y="3" width="8" height="8" fill="#0b86c9" />
    <path d="M4.500 3v8.500H13" fill="none" stroke="#222" />
  </I>
);
const CustomizeMark = () => (
  <I s={12} vb={12}>
    <path d="M2 2.500h8" stroke="#333" />
    <path d="M2 5h8l-4 5z" fill="#333" />
  </I>
);
const Binoculars = () => (
  <I s={17} vb={16}>
    <rect x="1" y="6" width="6" height="9" rx="1" fill="#444" />
    <rect x="9" y="6" width="6" height="9" rx="1" fill="#444" />
    <rect x="2.5" y="1" width="3.5" height="6" fill="#777" />
    <rect x="10" y="1" width="3.5" height="6" fill="#777" />
    <rect x="6" y="5" width="4" height="4" fill="#333" />
  </I>
);
const TreeIcon = ({ s = 16 }: { s?: number }) => (
  <I s={s} vb={16}>
    <g fill="none" stroke="#444" strokeWidth=".9">
      <rect x="3" y="0.5" width="3.5" height="3.5" />
      <rect x="3" y="6.2" width="3.5" height="3.5" />
      <rect x="3" y="12" width="3.5" height="3.5" />
      <rect x="10" y="6.2" width="3.5" height="3.5" />
      <path d="M4.7 4v2.2M4.7 9.700V12M6.500 8H10" />
    </g>
  </I>
);
const FolderPair = () => (
  <I s={18} vb={18}>
    <path d="M1 3h5l1 1h4v7H1z" fill="#eedfc2" stroke="#b7a57d" />
    <path d="M4 6h5l1 1h4v7H4z" fill="#f3e6cc" stroke="#b7a57d" />
    <path d="M7 9h5l1 1h4v7H7z" fill="#fbf2dc" stroke="#b7a57d" />
  </I>
);
const FavFolder = () => (
  <I s={18} vb={18}>
    <path d="M1 4h6l1 2h9v10H1z" fill="#f8ecc8" stroke="#b79a56" />
    <path d="M9 8v6M6.4 11h5.2M7 9l4 4M11 9l-4 4" stroke="#1c5d7c" />
  </I>
);
const HammerIcon = () => (
  <I s={18} vb={18}>
    <path d="M1 3l3-2h6v4H5L3 6z" fill="#777" />
    <rect x="5.5" y="5" width="2.5" height="12" fill="#c9a860" stroke="#8b6d2e" strokeWidth=".5" />
    <rect x="13" y="1" width="2" height="8" fill="#999" />
    <rect x="12" y="9" width="4" height="8" rx="1" fill="#d9a23a" stroke="#8b6d2e" strokeWidth=".5" />
  </I>
);
const ListIcon = () => (
  <I s={18} vb={18}>
    <path d="M2 1h10l4 4v12H2z" fill="#f4f4f4" stroke="#8a8a8a" />
    {[6, 10, 14].map((y) => (
      <g key={y}>
        <circle cx="5.5" cy={y} r="1.2" fill="none" stroke="#666" />
        <path d={`M8 ${y}h6`} stroke="#777" />
      </g>
    ))}
  </I>
);
const TreeHideIcon = () => (
  <I s={20} vb={20}>
    <g fill="none" stroke="#b4b4b4">
      <rect x="1.5" y="1.5" width="4" height="4" />
      <rect x="1.5" y="8.5" width="4" height="4" />
      <rect x="1.5" y="15.5" width="4" height="4" />
      <path d="M8 1v13M13 1v6M18 1v8" />
    </g>
    <ellipse cx="13" cy="13" rx="5" ry="3" fill="#fff" stroke="#222" />
    <circle cx="13" cy="13" r="1.6" fill="#222" />
    <path d="M8 8l11 11" stroke="#222" strokeWidth="1.2" />
  </I>
);
const FunnelIcon = () => (
  <I s={17} vb={16}>
    <path d="M1 2h14l-5 6v7H6V8z" fill="#f3f3f3" stroke="#b5b5b5" />
  </I>
);
const PlusIcon = () => (
  <I s={13} vb={13}>
    <path d="M6.5 1v11M1 6.5h11" stroke="#a3a3a3" strokeWidth="3" />
  </I>
);
const ClearX = () => (
  <I s={10} vb={10}>
    <path d="M1 1l8 8M9 1L1 9" stroke="#9a9a9a" strokeWidth="1.1" />
  </I>
);
const AsmIcon = () => (
  <I>
    <polygon points="1.5,4 5,1 5,12 14.5,12 14.5,15 1.5,15" fill="#f9dfa4" stroke="#b08a3a" />
    <polygon points="5,4 7.5,1 15,1 15,10 12.5,12 5,12" fill="#8fd7f2" stroke="#2d7fa3" />
    <path d="M5 4h7.5v8M12.5 4L15 1" fill="none" stroke="#2d7fa3" />
  </I>
);
const TreePlane = () => (
  <I>
    <path d="M4.5 3.5h10.5l-3.5 9H1z" fill="none" stroke="#6b5327" strokeWidth="1" />
  </I>
);
const PartIcon = () => (
  <svg width="14" height="14" viewBox="0 0 16 16" style={{ flex: "none", display: "block" }}>
    <Cube16 />
  </svg>
);
const SpringPart = () => (
  <svg width="14" height="14" viewBox="0 0 16 16" style={{ flex: "none", display: "block" }}>
    <Cube16 front="#d5e8f0" />
    <path d="M1 4c3 1 5 1 3 3S1 8 3 10s3 1 2 3" fill="none" stroke="#222" strokeWidth="1.2" />
  </svg>
);
const InsertArrow = () => (
  <I s={12} vb={12}>
    <path d="M0 4.5h5.5V1L11.5 6l-6 5V7.5H0z" fill="#1f8a1f" stroke="#0d4f0d" strokeWidth=".6" />
  </I>
);
const GlobeIcon = () => (
  <I>
    <ellipse cx="8" cy="8" rx="6.5" ry="7" fill="#3f9fdc" />
    <path d="M5 3c3-1 4 1 3 3S4 8 4 11M10 8c3 0 3 2 2 4" stroke="#cdeefa" fill="none" strokeWidth="1.5" />
    <ellipse cx="7.5" cy="8" rx="8" ry="3.5" transform="rotate(-55 8 8)" fill="none" stroke="#555" />
  </I>
);
const WinBlue = () => (
  <I>
    <rect x="1" y="0.5" width="14" height="15" fill="#e3eff5" stroke="#1c6a8c" strokeWidth="1.2" />
  </I>
);
const ViewCube = () => (
  <I s={18} vb={18}>
    <path d="M1 5l4-4h12v12l-4 4H1z" fill="#fff" stroke="#333" strokeWidth="1.2" />
    <path d="M1 5h12v12M13 5l4-4" fill="none" stroke="#333" />
    <rect x="3" y="8" width="8" height="8" fill="#f6d792" stroke="#b08a3a" />
    <rect x="6" y="5" width="7" height="7" fill="#7dc7e6" stroke="#2d7fa3" />
  </I>
);
const NavArrow = ({ d, c = "#666" }: { d: string; c?: string }) => (
  <I s={12} vb={12}>
    <path d={d} fill={c} />
  </I>
);

/* ---------- the part on screen: coordinates as read off the crop, squeezed by the viewBox ---------- */
const edge = { stroke: "#2b2b2b", strokeWidth: 1, vectorEffect: "non-scaling-stroke" as const, strokeLinejoin: "round" as const };

const Model = () => (
  <ModelSvg viewBox="0 0 1568 1380" preserveAspectRatio="none">
    <defs>
      <linearGradient id="rod" gradientUnits="userSpaceOnUse" x1="680" y1="560" x2="815" y2="545">
        <stop offset="0" stopColor="#a37628" />
        <stop offset=".45" stopColor="#9b7027" />
        <stop offset=".8" stopColor="#6a4d1a" />
        <stop offset="1" stopColor="#60461a" />
      </linearGradient>
    </defs>
    <polygon points="25,497 640,62 656,82 350,300 42,516" fill="#ae5340" {...edge} />
    <polygon points="25,497 42,516 143,1347 127,1333" fill="#a64e3c" {...edge} />
    <polygon points="42,516 350,300 452,1133 143,1347" fill="#692e24" {...edge} />
    <polygon points="706,38 1437,25 1435,52 1068,60 700,65" fill="#ae5340" {...edge} />
    <polygon points="1068,60 1435,52 1536,882 1170,888" fill="#853c2f" {...edge} />
    <polygon points="1437,25 1435,52 1536,882 1540,868" fill="#4f2a22" {...edge} />
    <polygon points="350,300 367,316 468,1147 450,1133" fill="#9b9b9b" {...edge} />
    <polygon points="367,316 628,132 728,962 468,1147" fill="#656565" {...edge} />
    <polygon points="757,90 1063,85 1165,915 858,922" fill="#858585" {...edge} />
    <polygon points="1063,85 1068,60 1170,890 1165,915" fill="#565656" {...edge} />
    <path d="M350 300 L656 82 Q672 66 700 65 L1068 60 L1063 85 L757 90 L700 140 L628 132 L367 316 Z" fill="#a9a9a9" {...edge} />
    <path d="M630 150 L728 970 C735 1000 770 1010 795 1009 C830 1008 862 985 860 940 L762 120 Z" fill="url(#rod)" {...edge} />
    <path d="M628 132 C640 165 665 178 690 178 C725 178 760 150 757 90 C735 66 700 62 680 68 L640 100 Z" fill="#a9a9a9" stroke="none" />
    <path d="M630 140 C640 165 665 178 690 178 C725 178 752 150 759 122" fill="none" {...edge} />
  </ModelSvg>
);

/* ---------- ribbon content ---------- */
const Small = ({ icon, label, off, caret }: { icon: React.ReactNode; label: string; off?: boolean; caret?: boolean }) => (
  <SmallRow $off={off}>
    {icon}
    <span>{label}</span>
    {caret && <Caret $dim={off} />}
  </SmallRow>
);

const Footer = ({ label, hot }: { label: string; hot?: boolean }) => (
  <GroupFooter $hot={hot}>
    {label}
    <Caret />
  </GroupFooter>
);

const tabs: [string, number, number?][] = [
  ["Analysis", 93],
  ["Annotate", 102],
  ["Manikin", 82, 12],
  ["Tools", 86, 12],
  ["View", 73],
  ["Framework", 115],
  ["Applications", 124],
];

type TreeItem = { icon: React.ReactNode; label: string; pad: number; gap: number; id?: string; param?: string; exp?: boolean; mark?: "dot" | "box" };
const rows: TreeItem[] = [
  { icon: <AsmIcon />, label: "ASM0001.ASM", pad: 5, gap: 4, param: "asm00" },
  { icon: <TreePlane />, label: "ASM_RIGHT", pad: 24, gap: 5, id: "1" },
  { icon: <TreePlane />, label: "ASM_TOP", pad: 24, gap: 5, id: "3" },
  { icon: <TreePlane />, label: "ASM_FRONT", pad: 24, gap: 5, id: "5" },
  { icon: <CsysIcon />, label: "ASM_DEF_CSYS", pad: 24, gap: 5, id: "7" },
  { icon: <PartIcon />, label: "PRT0002.PRT", pad: 10, gap: 8, id: "45", param: "prt000", exp: true },
  { icon: <PartIcon />, label: "PRT0002.PRT", pad: 10, gap: 1, id: "50", param: "prt000", exp: true, mark: "dot" },
  { icon: <SpringPart />, label: "PRT0001.PRT", pad: 10, gap: 1, id: "51", param: "prt000", exp: true, mark: "box" },
  { icon: <InsertArrow />, label: "Insert Here", pad: 26, gap: 7 },
];

export default function App() {
  return (
    <Window>
      <GlobalStyle />
      <TitleBar>
        <Qat>
          <QatSlot $w={40}><AppIcon /></QatSlot>
          <QatSep />
          <QatSlot $w={27}><DocIcon /></QatSlot>
          <QatSlot $w={23}><OpenIcon /></QatSlot>
          <QatSlot $w={24}><SaveIcon /></QatSlot>
          <QatSlot $w={24}><UndoIcon /></QatSlot>
          <QatSlot $w={12}><Caret $dim /></QatSlot>
          <QatSlot $w={27}><UndoIcon flip /></QatSlot>
          <QatSlot $w={12}><Caret $dim /></QatSlot>
          <QatSlot $w={24}><RegenSmall /></QatSlot>
          <QatSlot $w={26}><WindowsIcon /></QatSlot>
          <QatSlot $w={12}><Caret /></QatSlot>
          <QatSlot $w={26}><CloseSmall /></QatSlot>
          <QatSep />
          <QatSlot $w={22}><CustomizeMark /></QatSlot>
        </Qat>
        <Title>ASM0001 Rev: 00.4+ Released  (Active) - Creo Parametric</Title>
        <WinControls>
          <I>
            <path d="M3 10.5h9" stroke="#777" strokeWidth="2" />
          </I>
          <I>
            <rect x="3" y="3.5" width="10" height="9" fill="none" stroke="#666" />
            <rect x="3" y="3" width="10" height="2" fill="#666" />
          </I>
          <I>
            <path d="M3 3l9 9M12 3l-9 9" stroke="#777" strokeWidth="1.8" />
          </I>
        </WinControls>
      </TitleBar>

      <TabRow>
        <Tab $w={73} $kind="file">File</Tab>
        <Tab $w={84} $kind="active">Model</Tab>
        {tabs.map(([name, w, shift]) => (
          <Tab key={name} $w={w} $shift={shift}>{name}</Tab>
        ))}
        <TabRight>
          <I>
            <path d="M3 11l5-5 5 5z" fill="#4a4a4a" />
          </I>
          <I s={18}>
            <circle cx="9.5" cy="6" r="4.5" fill="none" stroke="#222" strokeWidth="2" />
            <path d="M6 10l-4 5" stroke="#222" strokeWidth="2.6" />
          </I>
          <I s={18}>
            <circle cx="8" cy="8" r="7.5" fill="#333" />
            <path d="M4 7l4-2 4 2-4 2z M5 9v2l3 1 3-1V9" fill="#fff" />
          </I>
          <Caret $dim />
          <I s={18}>
            <circle cx="8" cy="8" r="7.5" fill="#333" />
            <text x="8" y="12" textAnchor="middle" fontSize="12" fontWeight="700" fill="#fff" fontFamily="Liberation Sans, sans-serif">?</text>
          </I>
        </TabRight>
      </TabRow>

      <Ribbon>
        <Group $w={148}>
          <GroupBody>
            <Large $w={74}>
              <RegenIcon />
              <LargeLabel>Regenerate</LargeLabel>
              <CaretBelow />
            </Large>
            <SmallCol $w={74}>
              <Small icon={<CopyIcon />} label="Copy" off />
              <Small icon={<PasteIcon />} label="Paste" off caret />
              <Small icon={<DeleteIcon />} label="Delete" off caret />
            </SmallCol>
          </GroupBody>
          <Footer label="Operations" />
        </Group>
        <Group $w={146}>
          <GroupBody $pad={8}>
            <SmallCol $w={130}>
              <Small icon={<UdfIcon />} label="User-Defined Feature" />
              <Small icon={<CopyGeomIcon />} label="Copy Geometry" off />
              <Small icon={<ShrinkIcon />} label="Shrinkwrap" />
            </SmallCol>
          </GroupBody>
          <Footer label="Get Data" hot />
        </Group>
        <Group $w={282}>
          <GroupBody>
            <Large $w={67}>
              <AssembleIcon />
              <LargeLabel>Assemble</LargeLabel>
              <CaretBelow />
            </Large>
            <SmallCol $w={129}>
              <Small icon={<CreateIcon />} label="Create" />
              <Small icon={<RepeatIcon />} label="Repeat" off />
              <Small icon={<MirrorIcon />} label="Mirror Component" />
            </SmallCol>
            <GroupSep />
            <Large $w={85}>
              <DragIcon />
              <LargeLabel>Drag<br />Components</LargeLabel>
            </Large>
          </GroupBody>
          <Footer label="Component" />
        </Group>
        <Group $w={219}>
          <GroupBody>
            <Large $w={46}>
              <PlaneIcon />
              <LargeLabel>Plane</LargeLabel>
            </Large>
            <SmallCol $w={122} $pad={2}>
              <Small icon={<AxisIcon />} label="Axis" />
              <Small icon={<PointIcon />} label="Point" caret />
              <Small icon={<CsysIcon />} label="Coordinate System" />
            </SmallCol>
            <Large $w={50}>
              <SketchIcon />
              <LargeLabel>Sketch</LargeLabel>
            </Large>
          </GroupBody>
          <Footer label="Datum" />
        </Group>
        <Group $w={95}>
          <GroupBody $pad={16}>
            <SmallCol $w={70}>
              <Small icon={<HoleIcon />} label="Hole" />
              <Small icon={<ExtrudeIcon />} label="Extrude" />
              <Small icon={<RevolveIcon />} label="Revolve" />
            </SmallCol>
          </GroupBody>
          <Footer label="Cut & Surface" />
        </Group>
        <Group $w={72}>
          <GroupBody>
            <Large $w={71}>
              <PatternIcon />
              <LargeLabel>Pattern</LargeLabel>
              <CaretBelow />
            </Large>
          </GroupBody>
          <Footer label="Modifiers" />
        </Group>
        <Group $w={400}>
          <GroupBody>
            <Large $w={58}>
              <ManageViewsIcon />
              <LargeLabel $tight>Manage<br />Views <Caret /></LargeLabel>
            </Large>
            <Large $w={40}>
              <SectionIcon />
              <LargeLabel $tight>Section</LargeLabel>
              <CaretBelow />
            </Large>
            <Large $w={84}>
              <SphereIcon />
              <LargeLabel $tight>Appearances</LargeLabel>
              <CaretBelow />
            </Large>
            <SmallCol $w={96}>
              <Small icon={<ExplodedIcon />} label="Exploded View" />
              <Small icon={<ToggleIcon />} label="Toggle Status" off />
              <Small icon={<EditPosIcon />} label="Edit Position" />
            </SmallCol>
            <Large $w={54}>
              <DisplayStyleIcon />
              <LargeLabel $tight>Display<br />Style <Caret /></LargeLabel>
            </Large>
            <Large $w={60}>
              <PerspectiveIcon />
              <LargeLabel $tight>Perspective<br />View</LargeLabel>
            </Large>
          </GroupBody>
          <Footer label="Model Display" />
        </Group>
        <Group $w={311}>
          <GroupBody>
            <Large $w={78}>
              <InterfaceIcon />
              <LargeLabel $tight>Component<br />Interface</LargeLabel>
            </Large>
            <Large $w={53} $off>
              <PublishIcon />
              <LargeLabel $tight>Publish<br />Geometry</LargeLabel>
            </Large>
            <Large $w={52}>
              <TableIcon />
              <LargeLabel $tight>Family<br />Table</LargeLabel>
            </Large>
            <SmallCol $w={127}>
              <Small icon={<ParamsIcon />} label="Parameters" />
              <Small icon={<SwitchIcon />} label="Switch Dimensions" />
              <Small icon={<RelationsIcon />} label="Relations" />
            </SmallCol>
          </GroupBody>
          <Footer label="Model Intent" />
        </Group>
        <Group $w={122}>
          <GroupBody>
            <Large $w={60}>
              <BomIcon />
              <LargeLabel>Bill of<br />Materials</LargeLabel>
            </Large>
            <Large $w={56}>
              <RefViewerIcon />
              <LargeLabel>Reference<br />Viewer</LargeLabel>
            </Large>
          </GroupBody>
          <Footer label="Investigate" />
        </Group>
        <RibbonRest />
      </Ribbon>

      <Main>
        <Panel>
          <PanelTabs>
            <PanelTab $w={98} $active><TreeIcon s={18} />Model Tree</PanelTab>
            <PanelTab $w={105}><FolderPair />Folder Bro...</PanelTab>
            <PanelTab $w={88}><FavFolder />Favorites</PanelTab>
          </PanelTabs>
          <PanelHead>
            <PanelTitle>Model Tree</PanelTitle>
            <PanelSlot $w={18}><HammerIcon /></PanelSlot>
            <PanelSlot $w={22}><Caret /></PanelSlot>
            <PanelSlot $w={20}><ListIcon /></PanelSlot>
            <PanelSlot $w={22}><Caret /></PanelSlot>
            <PanelSlot $w={26}><TreeHideIcon /></PanelSlot>
          </PanelHead>
          <SearchRow>
            <SearchBox><ClearX /></SearchBox>
            <PanelSlot $w={22}><Caret /></PanelSlot>
            <PanelSlot $w={22}><Binoculars /></PanelSlot>
            <PanelSlot $w={30}><FunnelIcon /></PanelSlot>
            <PanelSlot $w={20}><PlusIcon /></PanelSlot>
          </SearchRow>
          <Tree>
            <TreeHeader>
              <HeaderCell />
              <HeaderCell>Feat ID</HeaderCell>
              <HeaderCell>ptc_c</HeaderCell>
            </TreeHeader>
            {rows.map((r, i) => (
              <TreeRow key={i}>
                <NameCell $pad={r.pad}>
                  {r.exp && <Expander />}
                  {r.icon}
                  {r.mark && <Marker $dot={r.mark === "dot"} />}
                  <RowLabel $gap={r.gap}>{r.label}</RowLabel>
                </NameCell>
                <IdCell>{r.id}</IdCell>
                <ParamCell>{r.param}</ParamCell>
              </TreeRow>
            ))}
            <TreeFiller>
              <FillerCell />
            </TreeFiller>
            <ScrollRow>
              <ScrollBar>
                <ScrollBtn><ScrollArrow $dir="l" /></ScrollBtn>
                <ScrollTrack $light />
                <ScrollBtn><ScrollArrow $dir="r" /></ScrollBtn>
              </ScrollBar>
              <ScrollBar>
                <ScrollBtn><ScrollArrow $dir="l" /></ScrollBtn>
                <ScrollTrack $w={30} $light />
                <ScrollTrack />
                <ScrollBtn><ScrollArrow $dir="r" /></ScrollBtn>
              </ScrollBar>
            </ScrollRow>
          </Tree>
        </Panel>

        <Viewport>
          <Canvas>
            <MiniToolbar>
              <MiniIcons />
            </MiniToolbar>
            <Model />
          </Canvas>
          <ModelTabs>
            <TabNav>
              <NavGlyph><NavArrow d="M6 2v8L1 6zM11 2v8L6 6z" /></NavGlyph>
              <NavGlyph><NavArrow d="M8 2v8L3 6z" c="#a5a5a5" /></NavGlyph>
              <NavGlyph><NavArrow d="M4 2v8l5-4z" c="#a5a5a5" /></NavGlyph>
              <NavGlyph><NavArrow d="M1 2v8l5-4zM6 2v8l5-4z" /></NavGlyph>
              <NewTab>+</NewTab>
            </TabNav>
            <ModelTab>Default All *</ModelTab>
          </ModelTabs>
        </Viewport>
      </Main>

      <StatusBar>
        <ToggleBox><TreeIcon /></ToggleBox>
        <StatusIcon><GlobeIcon /></StatusIcon>
        <StatusIcon><WinBlue /></StatusIcon>
        <StatusSep $ml={1} />
        <Message>
          <Bullet />
          Automatic regeneration of the parts has been completed.
        </Message>
        <StatusSep />
        <StatusSep $ml={40} />
        <StatusBox $w={42}>
          <Binoculars />
          <BoxDivider><Caret /></BoxDivider>
        </StatusBox>
        <StatusSep $ml={2} />
        <StatusBox $w={40}><ViewCube /></StatusBox>
        <Select>
          <SelectLabel>Geometry</SelectLabel>
          <SelectBtn><Caret /></SelectBtn>
        </Select>
        <Grip width="14" height="14" viewBox="0 0 14 14">
          <path d="M13 3L3 13M13 7l-6 6M13 11l-2 2" stroke="#b8b8b8" />
        </Grip>
      </StatusBar>
    </Window>
  );
}
